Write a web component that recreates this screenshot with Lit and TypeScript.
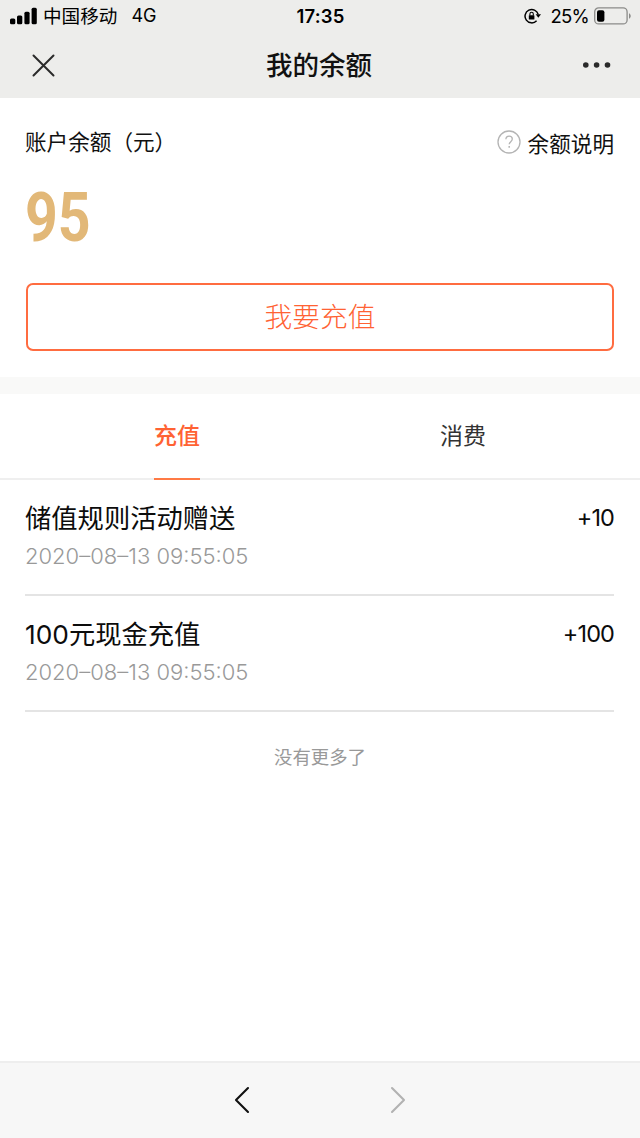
import { LitElement, html, css } from "lit";
import { customElement, state } from "lit/decorators.js";
import { classMap } from "lit/directives/class-map.js";

interface Entry {
  title: string;
  time: string;
  amount: string;
}

@customElement("status-bar")
class StatusBar extends LitElement {
  static styles = css`
    :host {
      display: grid;
      grid-template-columns: 1fr auto 1fr;
      align-items: center;
      height: 32px;
      padding: 0 9px 0 10px;
      color: #000;
      font-size: 18.6px;
      line-height: 32px;
    }
    .left,
    .right {
      display: flex;
      align-items: center;
    }
    .right {
      justify-content: flex-end;
    }
    svg {
      display: block;
      flex: none;
    }
    .carrier {
      margin-left: 6px;
    }
    .network {
      margin-left: 14px;
      font-size: 18px;
    }
    .time {
      font-size: 18.5px;
      font-weight: 600;
      letter-spacing: 0.2px;
    }
    .percent {
      margin: 0 5px 0 9px;
      font-size: 18.5px;
      letter-spacing: -0.7px;
    }
  `;

  render() {
    return html`
      <div class="left">
        <svg width="27" height="18" viewBox="0 0 27 18">
          <rect x="0" y="11.5" width="5.3" height="5.8" rx="1.5" />
          <rect x="7" y="8.5" width="5.3" height="8.8" rx="1.5" />
          <rect x="14.4" y="4.7" width="5.2" height="12.6" rx="1.5" />
          <rect x="21.6" y="0.8" width="5.2" height="16.5" rx="1.5" />
        </svg>
        <span class="carrier">中国移动</span>
        <span class="network">4G</span>
      </div>
      <span class="time">17:35</span>
      <div class="right">
        <svg width="17" height="16" viewBox="0 0 17 16">
          <path d="M12.6 12.8A6.7 6.7 0 1 1 14.2 6.4" fill="none" stroke="#000" stroke-width="1.5" />
          <path d="M11.7 6.3H17L14.3 9.8Z" />
          <rect x="4.8" y="7.2" width="5.6" height="4.3" rx="0.6" />
          <path d="M5.9 7.5V5.9a1.7 1.7 0 0 1 3.4 0v1.6" fill="none" stroke="#000" stroke-width="1.1" />
        </svg>
        <span class="percent">25%</span>
        <svg width="37" height="18" viewBox="0 0 37 18">
          <rect x="0.7" y="0.9" width="32.4" height="16" rx="4" fill="none" stroke="#8b8b89" stroke-width="1.3" />
          <rect x="3" y="3.3" width="7.4" height="11.4" rx="2" />
          <path d="M35 6.3c2.3 1 2.3 4.4 0 5.4z" fill="#8b8b89" />
        </svg>
      </div>
    `;
  }
}

@customElement("nav-header")
class NavHeader extends LitElement {
  static styles = css`
    :host {
      display: grid;
      grid-template-columns: 1fr auto 1fr;
      align-items: center;
      height: 66px;
      padding: 0 29px 0 32px;
      box-sizing: border-box;
    }
    svg {
      display: block;
    }
    .more {
      justify-self: end;
    }
    .title {
      margin-left: -5px;
      font-size: 26.5px;
      font-weight: 500;
      line-height: 40px;
      color: #111;
    }
  `;

  render() {
    return html`
      <svg width="23" height="23" viewBox="0 0 23 23">
        <path d="M1.5 1.5L21.5 21.5M21.5 1.5L1.5 21.5" stroke="#2a2a2a" stroke-width="2" stroke-linecap="round" />
      </svg>
      <span class="title">我的余额</span>
      <svg class="more" width="29" height="8" viewBox="0 0 29 8" fill="#2a2a2a">
        <circle cx="3.8" cy="4" r="2.8" />
        <circle cx="14.6" cy="4" r="2.8" />
        <circle cx="25.5" cy="4" r="2.8" />
      </svg>
    `;
  }
}

@customElement("balance-card")
class BalanceCard extends LitElement {
  static styles = css`
    :host {
      display: block;
      height: 279px;
      padding: 28px 26px 0 25px;
      box-sizing: border-box;
      color: #111;
    }
    .head {
      display: flex;
      justify-content: space-between;
      align-items: center;
      height: 32px;
      font-size: 21.6px;
      line-height: 32px;
    }
    .help {
      display: flex;
      align-items: center;
      gap: 7px;
      padding-top: 4px;
    }
    .help svg {
      margin-bottom: 4px;
    }
    .label {
      white-space: nowrap;
    }
    .amount {
      width: max-content;
      margin-top: 20px;
      height: 80px;
      font-family: Roboto, sans-serif;
      font-size: 69px;
      font-weight: 700;
      line-height: 80px;
      color: #e2b878;
      transform: scaleX(0.83);
      transform-origin: left;
    }
    .recharge {
      display: block;
      width: 588px;
      height: 68px;
      margin: 25px 0 0 1px;
      padding: 1px 0 0;
      border: 2px solid #ff6c40;
      border-radius: 7px;
      background: #fff;
      color: #ff6233;
      font-family: inherit;
      font-size: 27.7px;
      font-weight: 300;
      line-height: 63px;
    }
  `;

  render() {
    return html`
      <div class="head">
        <span class="label">账户余额（元）</span>
        <span class="help">
          <svg width="24" height="24" viewBox="0 0 24 24" fill="none" stroke="#b4b4b4">
            <circle cx="12" cy="12" r="11" stroke-width="1.3" />
            <path d="M8.9 9.3c0-2 1.3-3.2 3.2-3.2s3.2 1.2 3.2 3c0 2.4-3.1 2.7-3.1 5.2" stroke-width="1.3" />
            <path d="M12.2 16v1.7" stroke-width="1.5" />
          </svg>
          <span>余额说明</span>
        </span>
      </div>
      <div class="amount">95</div>
      <button class="recharge">我要充值</button>
    `;
  }
}

@customElement("entry-row")
class EntryRow extends LitElement {
  static properties = { entry: { attribute: false } };
  declare entry: Entry;

  static styles = css`
    :host {
      display: flex;
      justify-content: space-between;
      height: 116px;
      margin: 0 26px 0 25px;
      padding-top: 20px;
      box-sizing: border-box;
      border-bottom: 2px solid #e4e4e4;
      color: #0c0c0c;
    }
    .title {
      font-size: 26.3px;
      line-height: 38px;
    }
    .time {
      margin-top: 2px;
      font-size: 22px;
      font-weight: 300;
      line-height: 32px;
      color: #999;
    }
    .amount {
      font-size: 23.5px;
      line-height: 36px;
      letter-spacing: -0.9px;
    }
  `;

  render() {
    return html`
      <div>
        <div class="title">${this.entry.title}</div>
        <div class="time">${this.entry.time}</div>
      </div>
      <div class="amount">${this.entry.amount}</div>
    `;
  }
}

@customElement("app-root")
class AppRoot extends LitElement {
  @state() private active = 0;

  private tabs = ["充值", "消费"];
  private entries: Entry[] = [
    { title: "储值规则活动赠送", time: "2020–08–13 09:55:05", amount: "+10" },
    { title: "100元现金充值", time: "2020–08–13 09:55:05", amount: "+100" },
  ];

  static styles = css`
    :host {
      display: flex;
      flex-direction: column;
      width: 640px;
      height: 1138px;
      overflow: hidden;
      background: #fff;
      font-family: Inter, "Noto Sans CJK SC", sans-serif;
    }
    .top {
      flex: none;
      height: 98px;
      background: #ededeb;
    }
    .strip {
      flex: none;
      height: 17px;
      background: #f9f9f8;
    }
    .tabs {
      display: flex;
      flex: none;
      justify-content: space-around;
      height: 86px;
      padding: 0 34px;
      box-sizing: border-box;
      background: linear-gradient(#efefef, #efefef) bottom / 100% 2px no-repeat;
    }
    .tab {
      height: 86px;
      box-sizing: border-box;
      border-bottom: 2px solid transparent;
      font-size: 23px;
      line-height: 84px;
      color: #333;
      cursor: pointer;
    }
    .active {
      border-color: #ff7a45;
      color: #ff6233;
      font-weight: 500;
    }
    .list {
      flex: 1;
    }
    .end {
      padding-top: 30px;
      text-align: center;
      font-size: 18.4px;
      line-height: 30px;
      color: #999;
    }
    .toolbar {
      display: flex;
      flex: none;
      justify-content: center;
      align-items: center;
      gap: 140px;
      height: 77px;
      padding-bottom: 2px;
      box-sizing: border-box;
      border-top: 2px solid #eee;
      background: #f7f7f7;
    }
  `;

  render() {
    return html`
      <div class="top">
        <status-bar></status-bar>
        <nav-header></nav-header>
      </div>
      <balance-card></balance-card>
      <div class="strip"></div>
      <div class="tabs">
        ${this.tabs.map(
          (name, i) => html`<div
            class=${classMap({ tab: true, active: i === this.active })}
            @click=${() => (this.active = i)}
          >${name}</div>`
        )}
      </div>
      <div class="list">
        ${this.entries.map((entry) => html`<entry-row .entry=${entry}></entry-row>`)}
        <div class="end">没有更多了</div>
      </div>
      <div class="toolbar">
        <svg width="16" height="28" viewBox="0 0 16 28" fill="none" stroke="#111" stroke-width="2.1" stroke-linecap="round" stroke-linejoin="round">
          <path d="M14 2L2 14L14 26" />
        </svg>
        <svg width="16" height="28" viewBox="0 0 16 28" fill="none" stroke="#b2b2b2" stroke-width="2.1" stroke-linecap="round" stroke-linejoin="round">
          <path d="M2 2L14 14L2 26" />
        </svg>
      </div>
    `;
  }
}
